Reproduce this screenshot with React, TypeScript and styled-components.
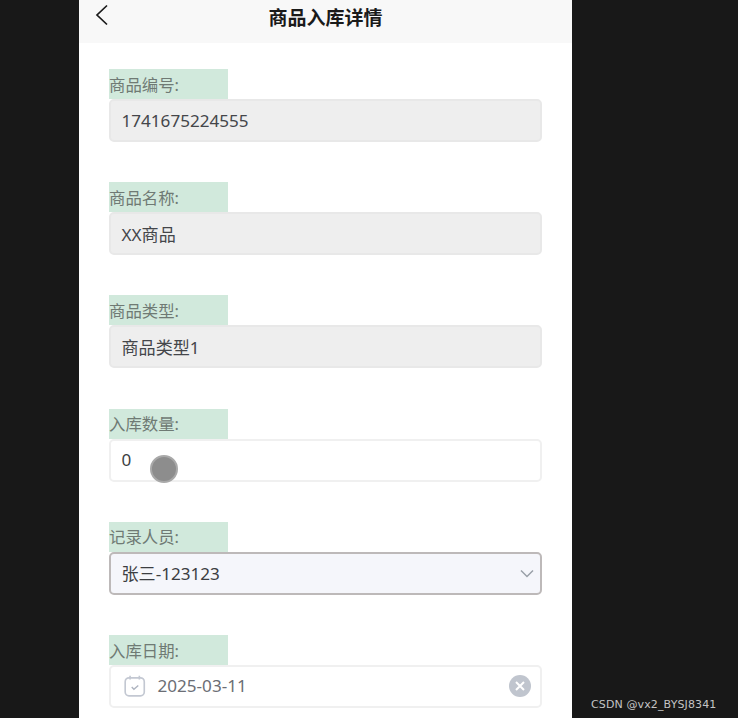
import styled, { createGlobalStyle } from 'styled-components';

const GlobalStyle = createGlobalStyle`
  html, body {
    margin: 0;
    padding: 0;
    height: 100%;
    overflow: hidden;
    background-color: #181818;
  }
  * {
    box-sizing: border-box;
  }
`;

const FONT = `"Noto Sans", "Noto Sans CJK SC", "Liberation Sans", sans-serif`;

const Page = styled.div`
  position: relative;
  width: 738px;
  height: 718px;
  padding-left: 79px;
  overflow: hidden;
  background-color: #181818;
  font-family: ${FONT};
`;

const Phone = styled.div`
  width: 493px;
  height: 718px;
  overflow: hidden;
  background-color: #fff;
`;

const Header = styled.header`
  position: relative;
  display: flex;
  align-items: center;
  justify-content: center;
  height: 43px;
  padding-bottom: 12px;
  background-color: #f8f8f8;
`;

const BackIcon = styled.svg`
  position: absolute;
  left: 15px;
  top: 4px;
  width: 15px;
  height: 22px;
`;

const Title = styled.h1`
  margin: 0;
  padding-top: 4px;
  font-size: 19px;
  line-height: 26px;
  font-weight: 700;
  color: #1a1a1a;
`;

const Form = styled.main`
  display: flex;
  flex-direction: column;
  gap: 40.2px;
  padding: 26px 30px 0;
`;

const Field = styled.section`
  display: flex;
  flex-direction: column;
  align-items: flex-start;
`;

const Label = styled.label`
  width: 119px;
  height: 30px;
  padding-top: 3.6px;
  font-size: 16.4px;
  line-height: 24px;
  white-space: nowrap;
  color: #6f7a74;
  background-color: #d1e9dc;
`;

const Control = styled.div<{ $variant?: 'disabled' | 'select' }>`
  position: relative;
  display: flex;
  align-items: center;
  width: 433px;
  height: 43px;
  padding: 0 11px 0 10.5px;
  border-radius: 5px;
  font-size: 17.1px;
  color: ${p => (p.$variant === 'disabled' ? '#44464a' : '#3c3e42')};
  border: 2px solid ${p =>
    p.$variant === 'select' ? '#bdb9b9' : p.$variant === 'disabled' ? '#e8e8e8' : '#f0f0f0'};
  background-color: ${p =>
    p.$variant === 'disabled' ? '#eeeeee' : p.$variant === 'select' ? '#f5f6fb' : '#fff'};
`;

const Value = styled.span<{ $muted?: boolean }>`
  flex: 1;
  margin-top: -1px;
  color: ${p => (p.$muted ? '#6b6e75' : 'inherit')};
`;

const Touch = styled.span`
  position: absolute;
  left: 39px;
  top: 14px;
  width: 28px;
  height: 28px;
  border-radius: 50%;
  background-color: #8d8d8d;
  border: 2px solid #a9a9a9;
`;

const DateIcon = styled.svg`
  width: 24px;
  height: 24px;
  margin-left: 1px;
  margin-right: 11px;
  flex-shrink: 0;
`;

const ClearIcon = styled.svg`
  width: 22px;
  height: 22px;
  margin-right: -2px;
  flex-shrink: 0;
`;

const Chevron = styled.svg`
  width: 14px;
  height: 9px;
  margin-right: -5px;
  flex-shrink: 0;
`;

const Watermark = styled.span`
  position: absolute;
  left: 591px;
  top: 697px;
  font-family: "DejaVu Sans", sans-serif;
  font-size: 11px;
  line-height: 16px;
  letter-spacing: 0.12px;
  color: #c4c4c4;
  white-space: nowrap;
`;

const App = () => {
  return (
    <Page>
      <GlobalStyle />
      <Phone>
        <Header>
          <BackIcon viewBox='0 0 15 22' fill='none'>
            <path d='M13 3 L3 12.5 L13 22' stroke='#1a1a1a' strokeWidth='1.7' transform='translate(0 -1.5)' />
          </BackIcon>
          <Title>商品入库详情</Title>
        </Header>
        <Form>
          <Field>
            <Label>商品编号:</Label>
            <Control $variant='disabled'>
              <Value>1741675224555</Value>
            </Control>
          </Field>
          <Field>
            <Label>商品名称:</Label>
            <Control $variant='disabled'>
              <Value>XX商品</Value>
            </Control>
          </Field>
          <Field>
            <Label>商品类型:</Label>
            <Control $variant='disabled'>
              <Value>商品类型1</Value>
            </Control>
          </Field>
          <Field>
            <Label>入库数量:</Label>
            <Control>
              <Value>0</Value>
              <Touch />
            </Control>
          </Field>
          <Field>
            <Label>记录人员:</Label>
            <Control $variant='select'>
              <Value>张三-123123</Value>
              <Chevron viewBox='0 0 14 9' fill='none'>
                <path d='M1 1.5 L7 7.5 L13 1.5' stroke='#9aa0a8' strokeWidth='1.5' />
              </Chevron>
            </Control>
          </Field>
          <Field>
            <Label>入库日期:</Label>
            <Control>
              <DateIcon viewBox='0 0 22 22' fill='none'>
                <rect x='2' y='3.5' width='17.5' height='16.5' rx='3.5' stroke='#c3c8d2' strokeWidth='1.5' />
                <path d='M6.5 1.5 V5 M15 1.5 V5' stroke='#c3c8d2' strokeWidth='1.5' />
                <path d='M8 12 L10 14 L14 10.5' stroke='#aeb4c0' strokeWidth='1.3' />
              </DateIcon>
              <Value $muted>2025-03-11</Value>
              <ClearIcon viewBox='0 0 22 22'>
                <circle cx='11' cy='11' r='11' fill='#c0c5ce' />
                <path d='M7 7 L15 15 M15 7 L7 15' stroke='#fff' strokeWidth='2' />
              </ClearIcon>
            </Control>
          </Field>
        </Form>
      </Phone>
      <Watermark>CSDN @vx2_BYSJ8341</Watermark>
    </Page>
  );
};

export default App;
